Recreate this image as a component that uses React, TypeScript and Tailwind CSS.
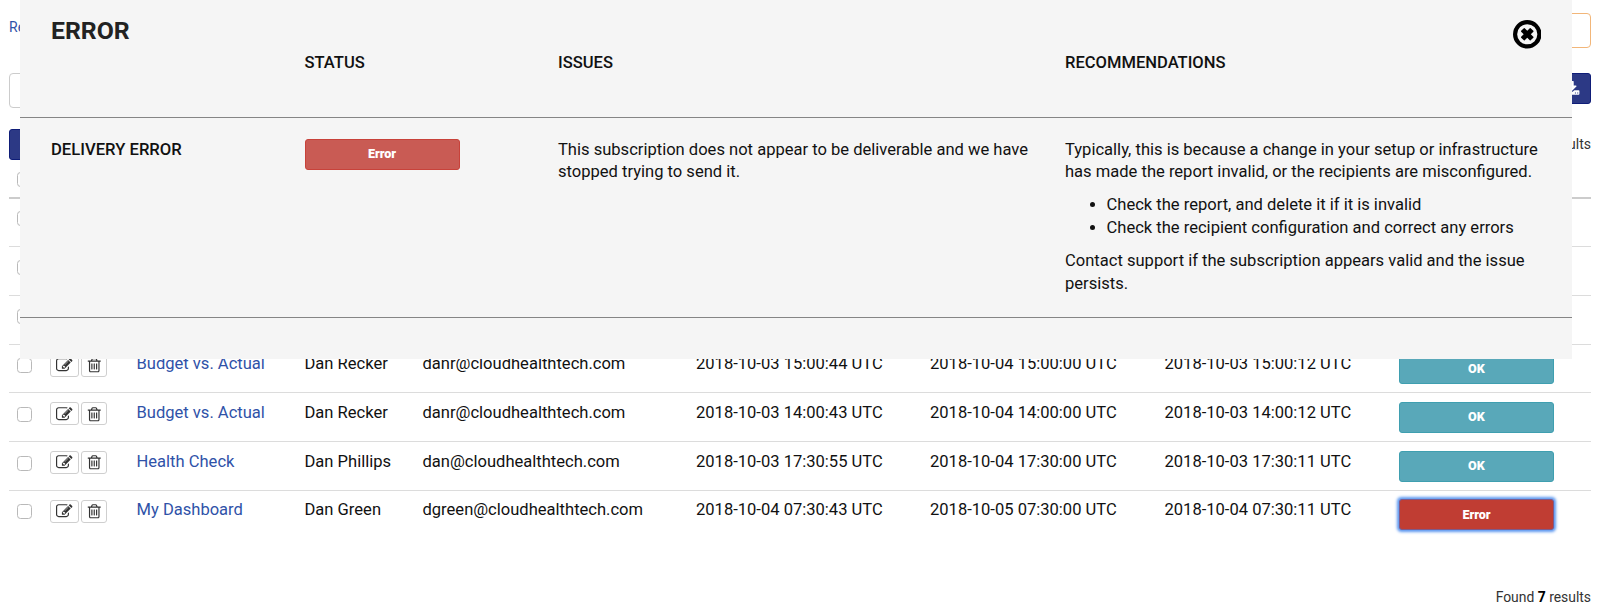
import clsx from "clsx";

// ── Types ──────────────────────────────────────────────────────────────
interface Subscription {
  name: string;
  owner: string;
  recipient: string;
  lastSent: string;
  nextRun: string;
  created: string;
  status: "ok" | "error";
}

// ── Data ───────────────────────────────────────────────────────────────
const COVERED_ROWS = ["row-1", "row-2", "row-3"];

const SUBSCRIPTIONS: Subscription[] = [
  { name: "Budget vs. Actual", owner: "Dan Recker",   recipient: "danr@cloudhealthtech.com",   lastSent: "2018-10-03 15:00:44 UTC", nextRun: "2018-10-04 15:00:00 UTC", created: "2018-10-03 15:00:12 UTC", status: "ok" },
  { name: "Budget vs. Actual", owner: "Dan Recker",   recipient: "danr@cloudhealthtech.com",   lastSent: "2018-10-03 14:00:43 UTC", nextRun: "2018-10-04 14:00:00 UTC", created: "2018-10-03 14:00:12 UTC", status: "ok" },
  { name: "Health Check",      owner: "Dan Phillips", recipient: "dan@cloudhealthtech.com",    lastSent: "2018-10-03 17:30:55 UTC", nextRun: "2018-10-04 17:30:00 UTC", created: "2018-10-03 17:30:11 UTC", status: "ok" },
  { name: "My Dashboard",      owner: "Dan Green",    recipient: "dgreen@cloudhealthtech.com", lastSent: "2018-10-04 07:30:43 UTC", nextRun: "2018-10-05 07:30:00 UTC", created: "2018-10-04 07:30:11 UTC", status: "error" },
];

// ── Icons ──────────────────────────────────────────────────────────────
const ICONS = {
  edit: "M888 1184l116-116-152-152-116 116v56h96v96h56zm440-720q-16-16-33 1l-350 350q-17 17-1 33t33-1l350-350q17-17 1-33zm80 594v190q0 119-84.5 203.5t-203.5 84.5h-832q-119 0-203.5-84.5t-84.5-203.5v-832q0-119 84.5-203.5t203.5-84.5h832q63 0 117 25 15 7 18 23 3 17-9 29l-49 49q-14 14-32 8-23-6-45-6h-832q-66 0-113 47t-47 113v832q0 66 47 113t113 47h832q66 0 113-47t47-113v-126q0-13 9-22l64-64q15-15 35-7t20 29zm-96-738l288 288-672 672h-288v-288zm444 132l-92 92-288-288 92-92q28-28 68-28t68 28l152 152q28 28 28 68t-28 68z",
  trash: "M704 736v576q0 14-9 23t-23 9h-64q-14 0-23-9t-9-23v-576q0-14 9-23t23-9h64q14 0 23 9t9 23zm256 0v576q0 14-9 23t-23 9h-64q-14 0-23-9t-9-23v-576q0-14 9-23t23-9h64q14 0 23 9t9 23zm256 0v576q0 14-9 23t-23 9h-64q-14 0-23-9t-9-23v-576q0-14 9-23t23-9h64q14 0 23 9t9 23zm128 724v-948h-896v948q0 22 7 40.5t14.5 27 10.5 8.5h832q3 0 10.5-8.5t14.5-27 7-40.5zm-672-1076h448l-48-117q-7-9-17-11h-317q-10 2-17 11zm928 32v64q0 14-9 23t-23 9h-96v948q0 83-47 143.5t-113 60.5h-832q-66 0-113-58.5t-47-141.5v-952h-96q-14 0-23-9t-9-23v-64q0-14 9-23t23-9h309l70-167q15-37 54-63t79-26h320q40 0 79 26t54 63l70 167h309q14 0 23 9t9 23z",
  download: "M1344 1344q0-26-19-45t-45-19-45 19-19 45 19 45 45 19 45-19 19-45zm256 0q0-26-19-45t-45-19-45 19-19 45 19 45 45 19 45-19 19-45zm128-224v320q0 40-28 68t-68 28h-1472q-40 0-68-28t-28-68v-320q0-40 28-68t68-28h465l135 136q58 56 136 56t136-56l136-136h464q40 0 68 28t28 68zm-325-569q17 41-14 70l-448 448q-18 19-45 19t-45-19l-448-448q-31-29-14-70 17-39 59-39h256v-448q0-26 19-45t45-19h256q26 0 45 19t19 45v448h256q42 0 59 39z",
};

function Icon({ name, className }: { name: keyof typeof ICONS; className: string }) {
  return (
    <svg viewBox="0 0 1792 1792" fill="currentColor" className={className}>
      <path d={ICONS[name]} />
    </svg>
  );
}

function CloseIcon() {
  return (
    <svg viewBox="128 128 1536 1536" className="size-[28.5px]">
      <circle cx="896" cy="896" r="656" fill="none" stroke="currentColor" strokeWidth="224" />
      <path
        fill="currentColor"
        d="M1225 1079l-146 146q-10 10-23 10t-23-10l-137-137-137 137q-10 10-23 10t-23-10l-146-146q-10-10-10-23t10-23l137-137-137-137q-10-10-10-23t10-23l146-146q10-10 23-10t23 10l137 137 137-137q10-10 23-10t23 10l146 146q10 10 10 23t-10 23l-137 137 137 137q10 10 10 23t-10 23z"
      />
    </svg>
  );
}

// ── Controls ───────────────────────────────────────────────────────────
function Checkbox() {
  return (
    <input
      type="checkbox"
      className="block size-[15px] appearance-none rounded-[3.5px] border border-[#b9b9b9] bg-white"
    />
  );
}

function StatusButton({ status, muted = false }: { status: Subscription["status"]; muted?: boolean }) {
  return (
    <button
      className={clsx(
        "flex h-[31px] w-[155px] items-center justify-center rounded-[3px] border pt-px text-[12.6px] font-black text-white",
        status === "ok" && "border-[#3f9fb0] bg-[#59a8b9]",
        status === "error" && muted && "border-[#c8423a] bg-[#c95b54]",
        status === "error" && !muted && "border-[#7d5a8c] bg-[#c03d33] shadow-[0_0_3px_1.5px_#5b97f0]",
      )}
    >
      {status === "ok" ? "OK" : "Error"}
    </button>
  );
}

// ── Table rows ─────────────────────────────────────────────────────────
function SubscriptionRow({ item, first }: { item: Subscription; first: boolean }) {
  return (
    <div
      className={clsx("flex h-[48.75px] items-start", first ? "pt-[9.5px]" : "border-t border-[#dcdcdc] pt-[8.5px]")}
    >
      <div className="w-[41px] pt-[5px] pl-2">
        <Checkbox />
      </div>
      <div className="flex w-[86.5px] gap-0.5 pt-[0.5px]">
        <button className="flex h-[23px] w-[29px] items-center justify-center rounded-[3px] border border-[#cfcfcf] text-[#333]">
          <Icon name="edit" className="size-[16.5px]" />
        </button>
        <button className="flex h-[23px] w-[26px] items-center justify-center rounded-[3px] border border-[#cfcfcf] text-[#333]">
          <Icon name="trash" className="size-[16.5px]" />
        </button>
      </div>
      <a className="w-[168px] text-[#2f52a8]">{item.name}</a>
      <div className="w-[118px]">{item.owner}</div>
      <div className="w-[273.5px]">{item.recipient}</div>
      <div className="w-[234px]">{item.lastSent}</div>
      <div className="w-[234.5px]">{item.nextRun}</div>
      <div className="w-[234.5px]">{item.created}</div>
      <StatusButton status={item.status} />
    </div>
  );
}

function SubscriptionsPage() {
  return (
    <div className="flex h-[613px] flex-col pr-[9px] pl-[9px]">
      <div className="flex h-[73px] items-start justify-between pt-[13px]">
        <a className="pt-1 text-sm leading-5 text-[#2f52a8]">Re</a>
        <div className="h-[35px] w-[60px] rounded-[4px] border border-[#f2b679]" />
      </div>
      <div className="flex h-14 items-start justify-between">
        <div className="h-[35px] w-[300px] rounded-[4px] border border-[#ccc]" />
        <div className="flex h-[31px] w-[38px] items-center justify-center rounded-[3px] border border-[#0f1d78] bg-[#2c3985] text-white">
          <Icon name="download" className="size-[16px]" />
        </div>
      </div>
      <div className="flex h-[43px] items-start justify-between">
        <div className="h-[31px] w-[60px] rounded-[3px] border border-[#0f1d78] bg-[#2c3985]" />
        <span className="pt-[5px] text-sm leading-5 text-[#333]">results</span>
      </div>
      <div className="h-[26.5px] border-b-2 border-[#ccc] pl-2">
        <Checkbox />
      </div>
      <div className="-mt-[0.15px] -mb-px">
        {COVERED_ROWS.map((id) => (
          <div key={id} className="h-[48.75px] border-b border-[#dcdcdc] pt-[13px] pl-2">
            <Checkbox />
          </div>
        ))}
      </div>
      {SUBSCRIPTIONS.map((item, i) => (
        <SubscriptionRow key={item.lastSent} item={item} first={i === 0} />
      ))}
      <div className="mt-12 text-right text-[13.9px] leading-5 text-[#333]">
        Found <b className="text-black">7</b> results
      </div>
    </div>
  );
}

// ── Error panel ────────────────────────────────────────────────────────
function ErrorPanel() {
  return (
    <div className="absolute top-0 left-5 h-[359px] w-[1552px] bg-[#f5f5f5]">
      <div className="flex h-[117px] flex-col pl-[31px]">
        <div className="flex h-[52px] items-start justify-between pr-[31px]">
          <h2 className="pt-[18px] text-[24.8px] leading-[26px] font-bold text-[#222]">ERROR</h2>
          <button className="pt-5 text-black">
            <CloseIcon />
          </button>
        </div>
        <div className="flex font-medium">
          <div className="w-[253.5px]" />
          <div className="w-[253.5px]">STATUS</div>
          <div className="w-[507px]">ISSUES</div>
          <div>RECOMMENDATIONS</div>
        </div>
      </div>
      <div className="flex h-[201px] items-start border-y border-[#858585] pt-[20.5px] pl-[31px]">
        <div className="w-[253.5px] text-[16.65px] font-medium">DELIVERY ERROR</div>
        <div className="w-[253.5px]">
          <StatusButton status="error" muted />
        </div>
        <div className="w-[507px] pr-[30px]">
          This subscription does not appear to be deliverable and we have stopped trying to send it.
        </div>
        <div className="w-[480px]">
          <p>
            Typically, this is because a change in your setup or infrastructure has made the report invalid, or the
            recipients are misconfigured.
          </p>
          <ul className="my-2.5 list-disc pl-[41.5px]">
            <li>Check the report, and delete it if it is invalid</li>
            <li>Check the recipient configuration and correct any errors</li>
          </ul>
          <p>Contact support if the subscription appears valid and the issue persists.</p>
        </div>
      </div>
    </div>
  );
}

export default function App() {
  return (
    <div className="relative h-[613px] w-[1600px] overflow-hidden bg-white font-[Roboto,sans-serif] text-[16.56px] leading-[22.9px] text-[#111]">
      <SubscriptionsPage />
      <ErrorPanel />
    </div>
  );
}
